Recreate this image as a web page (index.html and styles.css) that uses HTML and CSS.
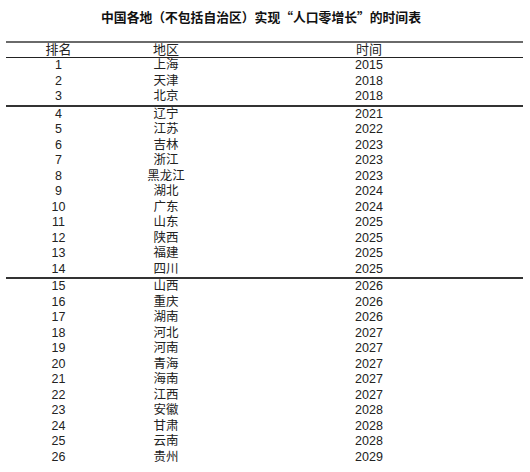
FILE: index.html
```html
<!DOCTYPE html>
<html lang="zh-CN">
<head>
<meta charset="utf-8">
<title>中国各地实现人口零增长的时间表</title>
<link rel="stylesheet" href="styles.css">
</head>
<body>
<h1 class="title">中国各地（不包括自治区）实现“人口零增长”的时间表</h1>
<div class="table">
  <div class="row head"><span>排名</span><span>地区</span><span>时间</span></div>
  <div class="group">
    <div class="row"><span>1</span><span>上海</span><span>2015</span></div>
    <div class="row"><span>2</span><span>天津</span><span>2018</span></div>
    <div class="row"><span>3</span><span>北京</span><span>2018</span></div>
  </div>
  <div class="group">
    <div class="row"><span>4</span><span>辽宁</span><span>2021</span></div>
    <div class="row"><span>5</span><span>江苏</span><span>2022</span></div>
    <div class="row"><span>6</span><span>吉林</span><span>2023</span></div>
    <div class="row"><span>7</span><span>浙江</span><span>2023</span></div>
    <div class="row"><span>8</span><span>黑龙江</span><span>2023</span></div>
    <div class="row"><span>9</span><span>湖北</span><span>2024</span></div>
    <div class="row"><span>10</span><span>广东</span><span>2024</span></div>
    <div class="row"><span>11</span><span>山东</span><span>2025</span></div>
    <div class="row"><span>12</span><span>陕西</span><span>2025</span></div>
    <div class="row"><span>13</span><span>福建</span><span>2025</span></div>
    <div class="row"><span>14</span><span>四川</span><span>2025</span></div>
  </div>
  <div class="group last">
    <div class="row"><span>15</span><span>山西</span><span>2026</span></div>
    <div class="row"><span>16</span><span>重庆</span><span>2026</span></div>
    <div class="row"><span>17</span><span>湖南</span><span>2026</span></div>
    <div class="row"><span>18</span><span>河北</span><span>2027</span></div>
    <div class="row"><span>19</span><span>河南</span><span>2027</span></div>
    <div class="row"><span>20</span><span>青海</span><span>2027</span></div>
    <div class="row"><span>21</span><span>海南</span><span>2027</span></div>
    <div class="row"><span>22</span><span>江西</span><span>2027</span></div>
    <div class="row"><span>23</span><span>安徽</span><span>2028</span></div>
    <div class="row"><span>24</span><span>甘肃</span><span>2028</span></div>
    <div class="row"><span>25</span><span>云南</span><span>2028</span></div>
    <div class="row"><span>26</span><span>贵州</span><span>2029</span></div>
  </div>
</div>
</body>
</html>
```
FILE: styles.css
```css
html, body {
  margin: 0;
  padding: 0;
  background: #ffffff;
}
body {
  font-family: "Liberation Sans", "Noto Sans CJK SC", sans-serif;
  color: #222;
  width: 530px;
}
.title {
  margin: 0;
  height: 41px;
  line-height: 34px;
  font-family: "Noto Sans CJK SC", sans-serif;
  font-size: 12.8px;
  font-weight: bold;
  text-align: center;
  padding-right: 8px;
  color: #111;
}
.table {
  margin-left: 6px;
  width: 517px;
  border-top: 2px solid #6a6a6a;
  font-size: 12.5px;
}
.row {
  display: grid;
  grid-template-columns: 105px 110px 296px 6px;
  height: 15.5px;
  line-height: 15.5px;
  text-align: center;
}
.head {
  height: 14px;
  line-height: 14px;
  border-bottom: 1px solid #222;
  font-size: 13px;
}
.group {
  border-bottom: 2px solid #333;
}
.group.last {
  border-bottom: none;
}
```
